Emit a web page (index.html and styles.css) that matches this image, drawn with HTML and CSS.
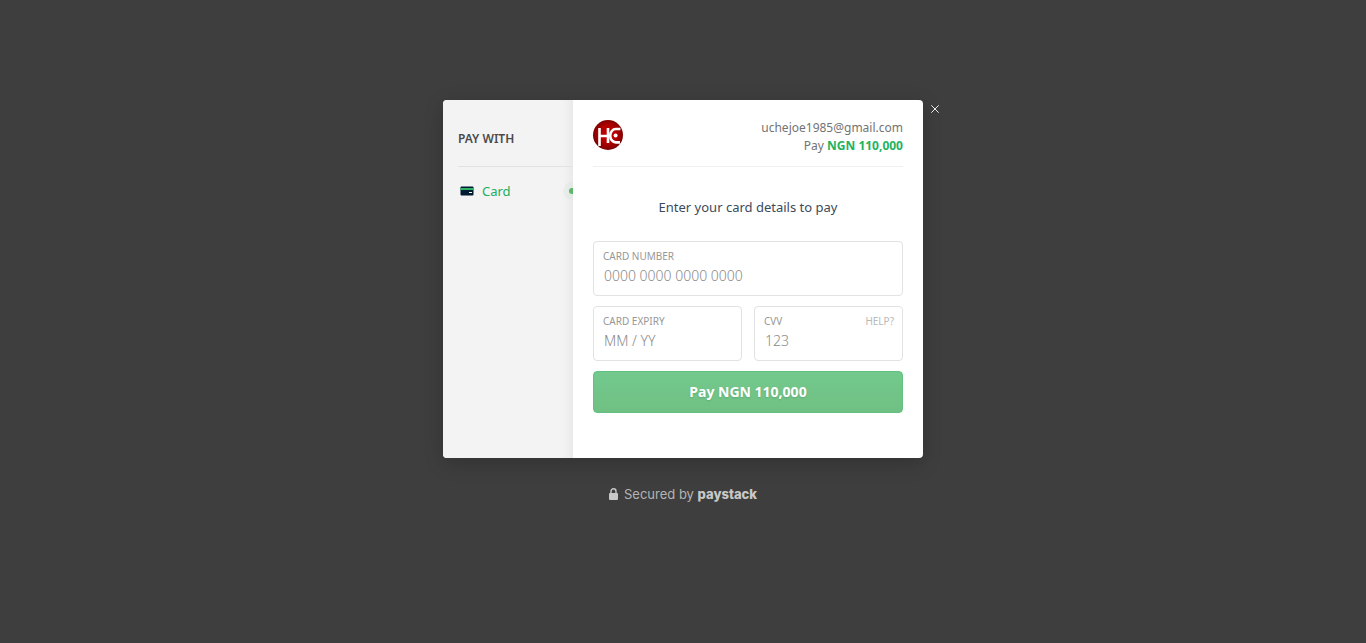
FILE: index.html
```html
<!DOCTYPE html>
<html lang="en">
<head>
    <meta charset="UTF-8">
    <meta name="viewport" content="width=device-width, initial-scale=1.0">
    <title>Paystack Checkout</title>
    <link rel="stylesheet" href="styles.css">
</head>
<body>

    <main class="checkout">
        <div class="modal">
            <button type="button" class="close-button" aria-label="Close">
                <svg viewBox="0 0 8 8" width="8" height="8">
                    <path d="M0.3 0.3 L7.7 7.7 M7.7 0.3 L0.3 7.7" stroke="#fff" stroke-width="0.9" fill="none"/>
                </svg>
            </button>

            <aside class="sidebar">
                <h2 class="sidebar-title">PAY WITH</h2>
                <nav>
                    <a href="#card" class="channel">
                        <svg class="channel-icon" viewBox="0 0 14 10" width="14" height="10">
                            <rect x="0.5" y="0.5" width="13" height="9" rx="1" fill="#011b33"/>
                            <rect x="0.5" y="2" width="13" height="2" fill="#2fb463"/>
                            <rect x="9" y="6" width="3" height="1" fill="#fff"/>
                        </svg>
                        <span>Card</span>
                        <span class="channel-dot"></span>
                    </a>
                </nav>
            </aside>

            <section class="content">
                <header class="header">
                    <svg class="logo" viewBox="0 0 30 30" width="30" height="30" role="img" aria-label="HC">
                        <defs>
                            <radialGradient id="logoRed" cx="50%" cy="48%" r="52%">
                                <stop offset="0" stop-color="#c90000"/>
                                <stop offset="0.6" stop-color="#b00000"/>
                                <stop offset="1" stop-color="#780000"/>
                            </radialGradient>
                        </defs>
                        <circle cx="15" cy="15" r="15" fill="url(#logoRed)"/>
                        <path d="M6.5 8 V26 M6.5 16 H16 M15 8 V23" fill="none" stroke="#fff" stroke-width="2.6"/>
                        <path d="M27.4 9 H22.8 A5.5 6.6 0 0 0 22.8 22.4 H27" fill="none" stroke="#fff" stroke-width="2.6"/>
                        <circle cx="22.6" cy="15.6" r="2" fill="#fff"/>
                    </svg>
                    <div class="customer">
                        <div>uchejoe1985@gmail.com</div>
                        <div>Pay <strong>NGN 110,000</strong></div>
                    </div>
                </header>

                <form class="card-form">
                    <h1 class="form-title">Enter your card details to pay</h1>

                    <div class="field">
                        <label for="cardNumber">CARD NUMBER</label>
                        <input type="text" id="cardNumber" name="cardNumber" placeholder="0000 0000 0000 0000">
                    </div>

                    <div class="form-row">
                        <div class="field">
                            <label for="expiry">CARD EXPIRY</label>
                            <input type="text" id="expiry" name="expiry" placeholder="MM / YY">
                        </div>
                        <div class="field">
                            <div class="field-top">
                                <label for="cvv">CVV</label>
                                <a href="#help" class="help-link">HELP?</a>
                            </div>
                            <input type="text" id="cvv" name="cvv" placeholder="123">
                        </div>
                    </div>

                    <button type="submit" class="pay-button">Pay NGN 110,000</button>
                </form>
            </section>
        </div>

        <footer class="secured">
            <svg viewBox="0 0 9 12" width="9" height="12">
                <path d="M2 6 V3.3 A2.5 2.5 0 0 1 7 3.3 V6" fill="none" stroke="#c8c8c8" stroke-width="1.4"/>
                <rect y="5" width="9" height="7" rx="1" fill="#c8c8c8"/>
            </svg>
            <span>Secured by <strong>paystack</strong></span>
        </footer>
    </main>

</body>
</html>
```
FILE: styles.css
```css
* {
    box-sizing: border-box;
}

body {
    font-family: 'Segoe UI', 'Noto Sans', sans-serif;
    background-color: #3e3e3e;
    color: #737373;
    margin: 0;
}

a {
    color: inherit;
    text-decoration: none;
}

.checkout {
    display: flex;
    flex-direction: column;
    align-items: center;
    padding: 100px 20px 20px;
}

.modal {
    position: relative;
    display: flex;
    width: 100%;
    max-width: 480px;
    background-color: white;
    border-radius: 4px;
    box-shadow: 0 5px 20px rgba(0, 0, 0, 0.2);
}

/* Sits outside the top right corner of the modal */
.close-button {
    position: absolute;
    top: 1px;
    right: -20px;
    display: flex;
    align-items: center;
    justify-content: center;
    width: 16px;
    height: 16px;
    padding: 0;
    border: none;
    background: none;
    cursor: pointer;
}

.sidebar {
    flex: 0 0 130px;
    padding-left: 15px;
    background-color: #f3f3f3;
    border-radius: 4px 0 0 4px;
    box-shadow: inset -12px 0 12px -10px rgba(0, 0, 0, 0.06);
}

.sidebar-title {
    margin: 0;
    padding: 29px 0 17px;
    border-bottom: 1px solid #e2e2e2;
    font-size: 12px;
    line-height: 20px;
    font-weight: 600;
    color: #4a4a4a;
}

.channel {
    display: flex;
    align-items: center;
    gap: 8px;
    height: 47px;
    padding-left: 2px;
    font-size: 13px;
    color: #22ad5c;
}

/* Half dot on the edge marks the selected channel */
.channel-dot {
    width: 4px;
    height: 6px;
    margin-left: auto;
    border-radius: 3px 0 0 3px;
    background-color: #5cb868;
    box-shadow: 0 0 0 6px rgba(92, 184, 104, 0.05);
    clip-path: inset(-6px 0 -6px -6px);
}

.content {
    flex: 1;
    min-width: 0;
    padding: 20px 20px 45px;
}

.header {
    display: flex;
    justify-content: space-between;
    padding-bottom: 11px;
    border-bottom: 1px solid #f0f0f0;
}

.customer {
    font-size: 12px;
    line-height: 18px;
    margin-top: -1px;
    text-align: right;
}

.customer strong {
    color: #22b35e;
}

.card-form {
    display: flex;
    flex-direction: column;
    gap: 10px;
}

.form-title {
    margin: 30px 0 14px;
    font-size: 13px;
    line-height: 20px;
    font-weight: normal;
    text-align: center;
    color: #3b4a5c;
}

.form-row {
    display: grid;
    grid-template-columns: 1fr 1fr;
    gap: 12px;
}

.field {
    height: 55px;
    padding: 6px 8px 6px 9px;
    border: 1px solid #e2e2e2;
    border-radius: 4px;
    font-size: 10px;
    line-height: 16px;
    color: #979797;
}

.field label {
    display: block;
}

.field-top {
    display: flex;
    justify-content: space-between;
}

.help-link {
    color: #b8b8b8;
}

.field input {
    display: block;
    width: 100%;
    height: 22px;
    padding: 0 1px;
    border: none;
    outline: none;
    background: none;
    font-family: inherit;
    font-size: 14px;
    color: #333;
}

.field input::placeholder {
    color: #8a8a8a;
    font-weight: 300;
}

.pay-button {
    height: 42px;
    padding: 0 0 2px;
    border: 1px solid #62c080;
    border-radius: 4px;
    background: linear-gradient(#73c98d, #70c083);
    color: white;
    font-family: inherit;
    font-size: 14px;
    font-weight: bold;
    text-shadow: 0 1px 2px rgba(0, 0, 0, 0.12);
    cursor: pointer;
}

.secured {
    display: flex;
    align-items: center;
    gap: 6px;
    margin-top: 26px;
    font-family: Inter, sans-serif;
    font-size: 13px;
    line-height: 20px;
    color: #b4b4b4;
}

.secured strong {
    font-weight: 800;
    color: #c8c8c8;
}
```
